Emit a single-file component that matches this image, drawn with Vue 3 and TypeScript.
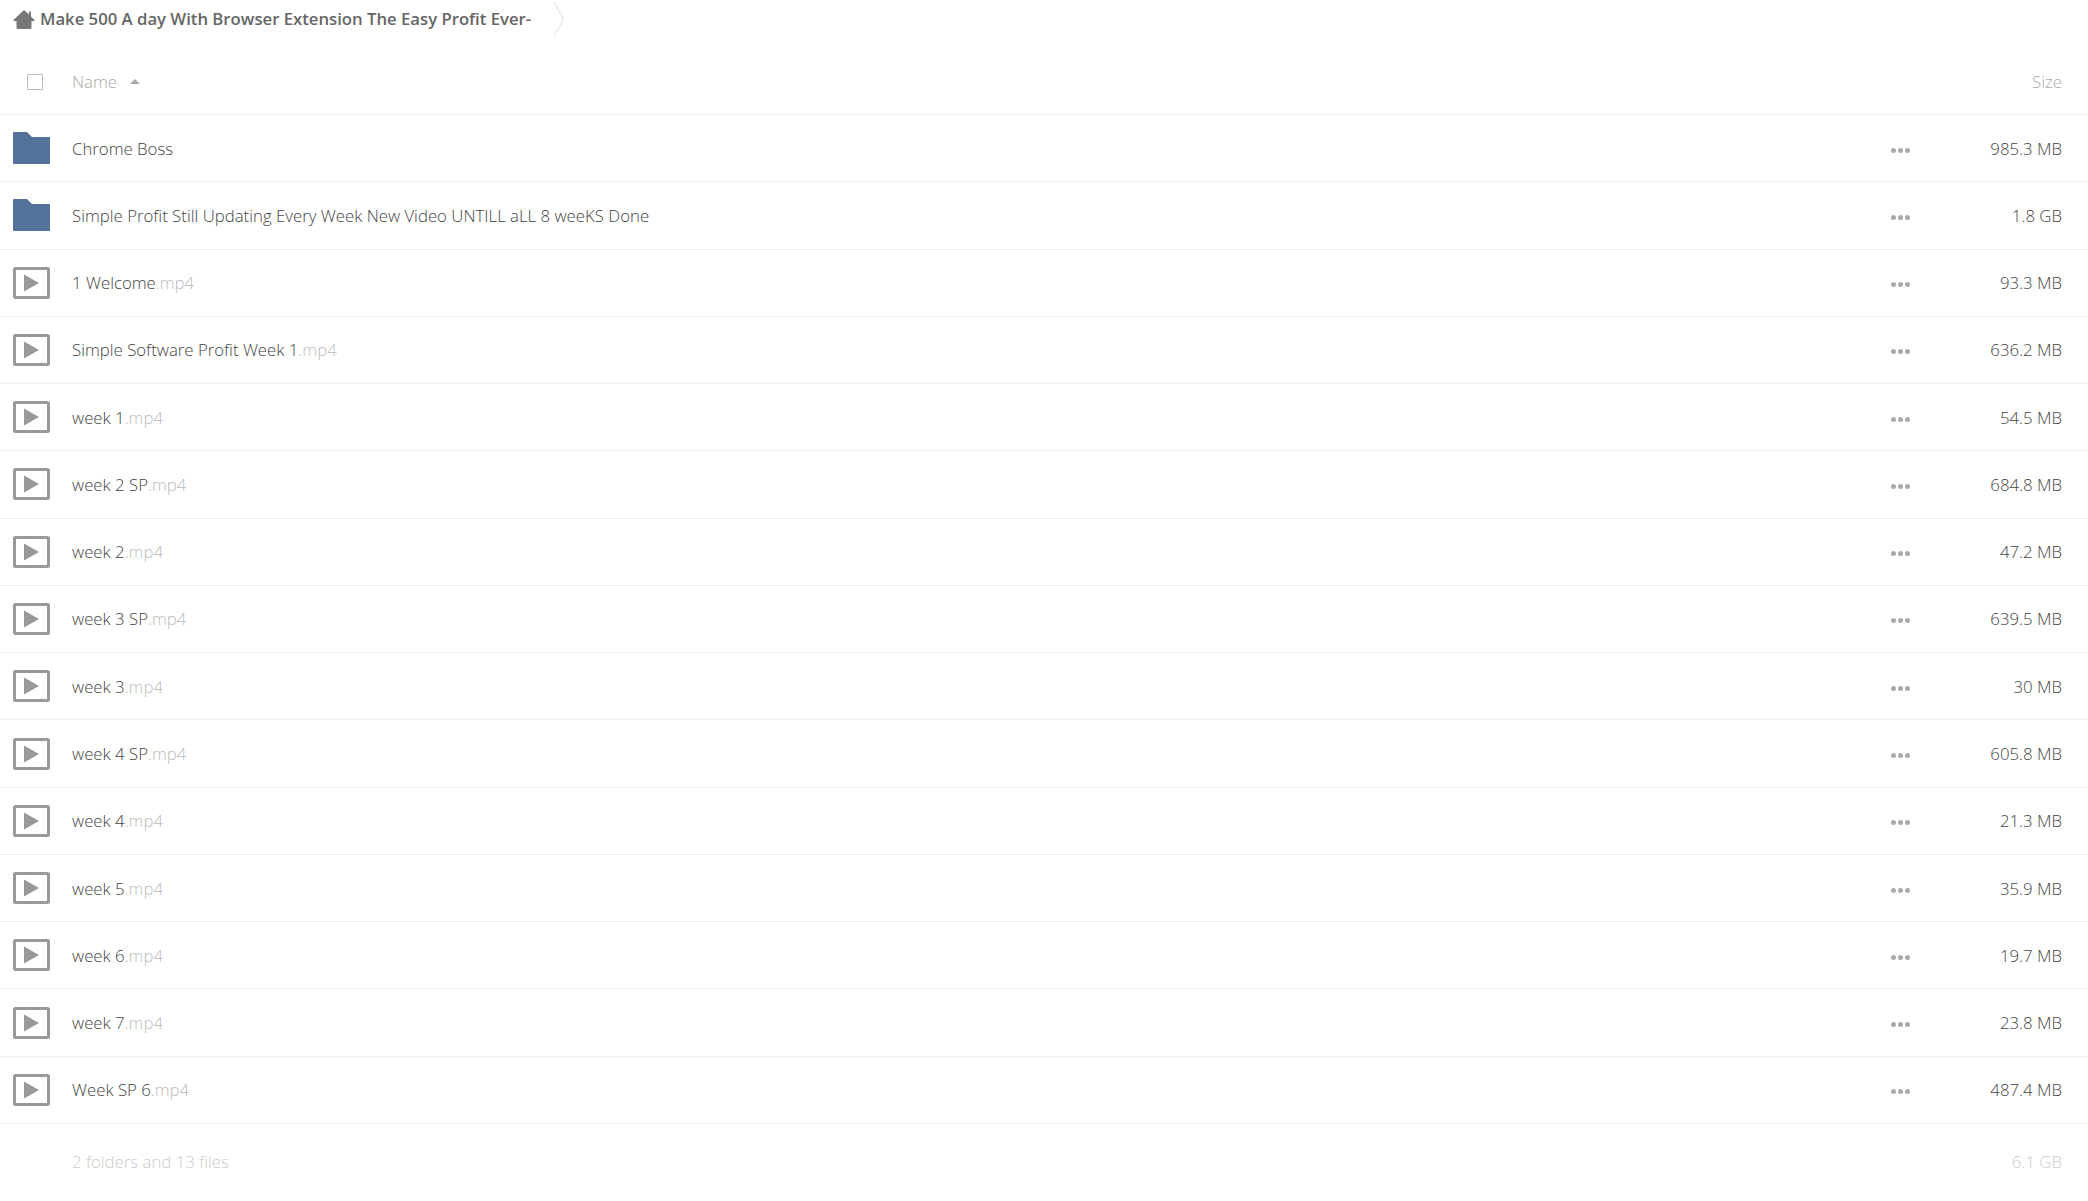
<template>
  <div class="page">
    <div class="crumbs">
      <svg class="home" width="22" height="20" viewBox="0 0 22 20">
        <path d="M11 1 L16 5.5 V2.5 H18 V7.5 L21.5 11 V12 H18.5 V19 L17.5 20 H4.5 L3.5 19 V12 H0.5 V11 Z" fill="#777" />
      </svg>
      <span class="crumb-title">Make 500 A day With Browser Extension The Easy Profit Ever-</span>
      <svg class="crumb-sep" width="12" height="36" viewBox="0 0 12 36">
        <path d="M1 1 L10.5 18 L1 35" fill="none" stroke="#ddd" stroke-width="1" />
      </svg>
    </div>

    <div class="head">
      <div class="check-cell"><span class="check"></span></div>
      <div class="head-name">
        Name
        <span class="sort"></span>
      </div>
      <div class="head-size">Size</div>
    </div>

    <div v-for="row in rows" :key="row.name + row.ext" class="row">
      <div class="icon-cell">
        <svg v-if="row.folder" width="37" height="32" viewBox="0 0 37 32">
          <path d="M1 0 H14 L19 5 H36 Q37 5 37 6 V31 Q37 32 36 32 H1 Q0 32 0 31 V1 Q0 0 1 0 Z" fill="#547199" />
        </svg>
        <svg v-else width="37" height="32" viewBox="0 0 37 32">
          <rect x="1.5" y="1.5" width="34" height="29" rx="1" fill="#fff" stroke="#999" stroke-width="3" />
          <path d="M11 7.5 L26 16 L11 24.5 Z" fill="#999" />
        </svg>
      </div>
      <div class="name">{{ row.name }}<span class="ext">{{ row.ext }}</span></div>
      <div class="more"><i></i><i></i><i></i></div>
      <div class="size">{{ row.size }}</div>
    </div>

    <div class="summary">
      <div class="summary-name">2 folders and 13 files</div>
      <div class="summary-size">6.1 GB</div>
    </div>
  </div>
</template>

<script setup lang="ts">
interface FileRow {
  name: string
  ext: string
  size: string
  folder?: boolean
}

const rows: FileRow[] = [
  { name: 'Chrome Boss', ext: '', size: '985.3 MB', folder: true },
  { name: 'Simple Profit Still Updating Every Week New Video UNTILL aLL 8 weeKS Done', ext: '', size: '1.8 GB', folder: true },
  { name: '1 Welcome', ext: '.mp4', size: '93.3 MB' },
  { name: 'Simple Software Profit Week 1', ext: '.mp4', size: '636.2 MB' },
  { name: 'week 1', ext: '.mp4', size: '54.5 MB' },
  { name: 'week 2 SP', ext: '.mp4', size: '684.8 MB' },
  { name: 'week 2', ext: '.mp4', size: '47.2 MB' },
  { name: 'week 3 SP', ext: '.mp4', size: '639.5 MB' },
  { name: 'week 3', ext: '.mp4', size: '30 MB' },
  { name: 'week 4 SP', ext: '.mp4', size: '605.8 MB' },
  { name: 'week 4', ext: '.mp4', size: '21.3 MB' },
  { name: 'week 5', ext: '.mp4', size: '35.9 MB' },
  { name: 'week 6', ext: '.mp4', size: '19.7 MB' },
  { name: 'week 7', ext: '.mp4', size: '23.8 MB' },
  { name: 'Week SP 6', ext: '.mp4', size: '487.4 MB' },
]
</script>

<style>
html,
body {
  background: #fff;
}
</style>

<style scoped>
.page {
  font-family: "Open Sans", "Noto Sans", sans-serif;
  font-size: 16.8px;
  font-weight: 300;
  color: #444;
  overflow: hidden;
}

.crumbs {
  display: flex;
  align-items: center;
  height: 37px;
  padding-left: 13px;
}

.home {
  flex-shrink: 0;
  margin-right: 5px;
}

.crumb-title {
  font-weight: 600;
  font-size: 16.72px;
  color: #666;
  white-space: nowrap;
}

.crumb-sep {
  flex-shrink: 0;
  margin-left: 22px;
}

.head {
  display: flex;
  align-items: center;
  height: 78px;
  padding-top: 12px;
  box-sizing: border-box;
  border-bottom: 1px solid #eee;
  color: #aaa;
}

.check-cell {
  display: flex;
  width: 72px;
  padding-left: 27px;
  flex-shrink: 0;
  box-sizing: border-box;
}

.check {
  width: 14px;
  height: 14px;
  border: 1px solid #bbb;
  border-radius: 1px;
}

.head-name {
  display: flex;
  align-items: center;
  flex: 1;
}

.sort {
  width: 0;
  height: 0;
  margin-left: 13px;
  border-left: 5px solid transparent;
  border-right: 5px solid transparent;
  border-bottom: 5px solid #aaa;
}

.head-size {
  padding-right: 26px;
}

.row {
  display: flex;
  align-items: center;
  height: 67.27px;
  box-sizing: border-box;
  border-bottom: 1px solid #eee;
}

.icon-cell {
  display: flex;
  width: 72px;
  padding-left: 13px;
  box-sizing: border-box;
  flex-shrink: 0;
}

.name {
  flex: 1;
  white-space: nowrap;
}

.ext {
  color: #bbb;
}

.more {
  display: flex;
  gap: 2px;
  margin-top: 4px;
}

.more i {
  width: 5px;
  height: 5px;
  border-radius: 50%;
  background: #aaa;
}

.size {
  width: 178px;
  padding-right: 26px;
  box-sizing: border-box;
  text-align: right;
  white-space: nowrap;
}

.summary {
  display: flex;
  align-items: center;
  height: 76px;
  color: #ccc;
}

.summary-name {
  flex: 1;
  padding-left: 72px;
}

.summary-size {
  padding-right: 26px;
}
</style>
